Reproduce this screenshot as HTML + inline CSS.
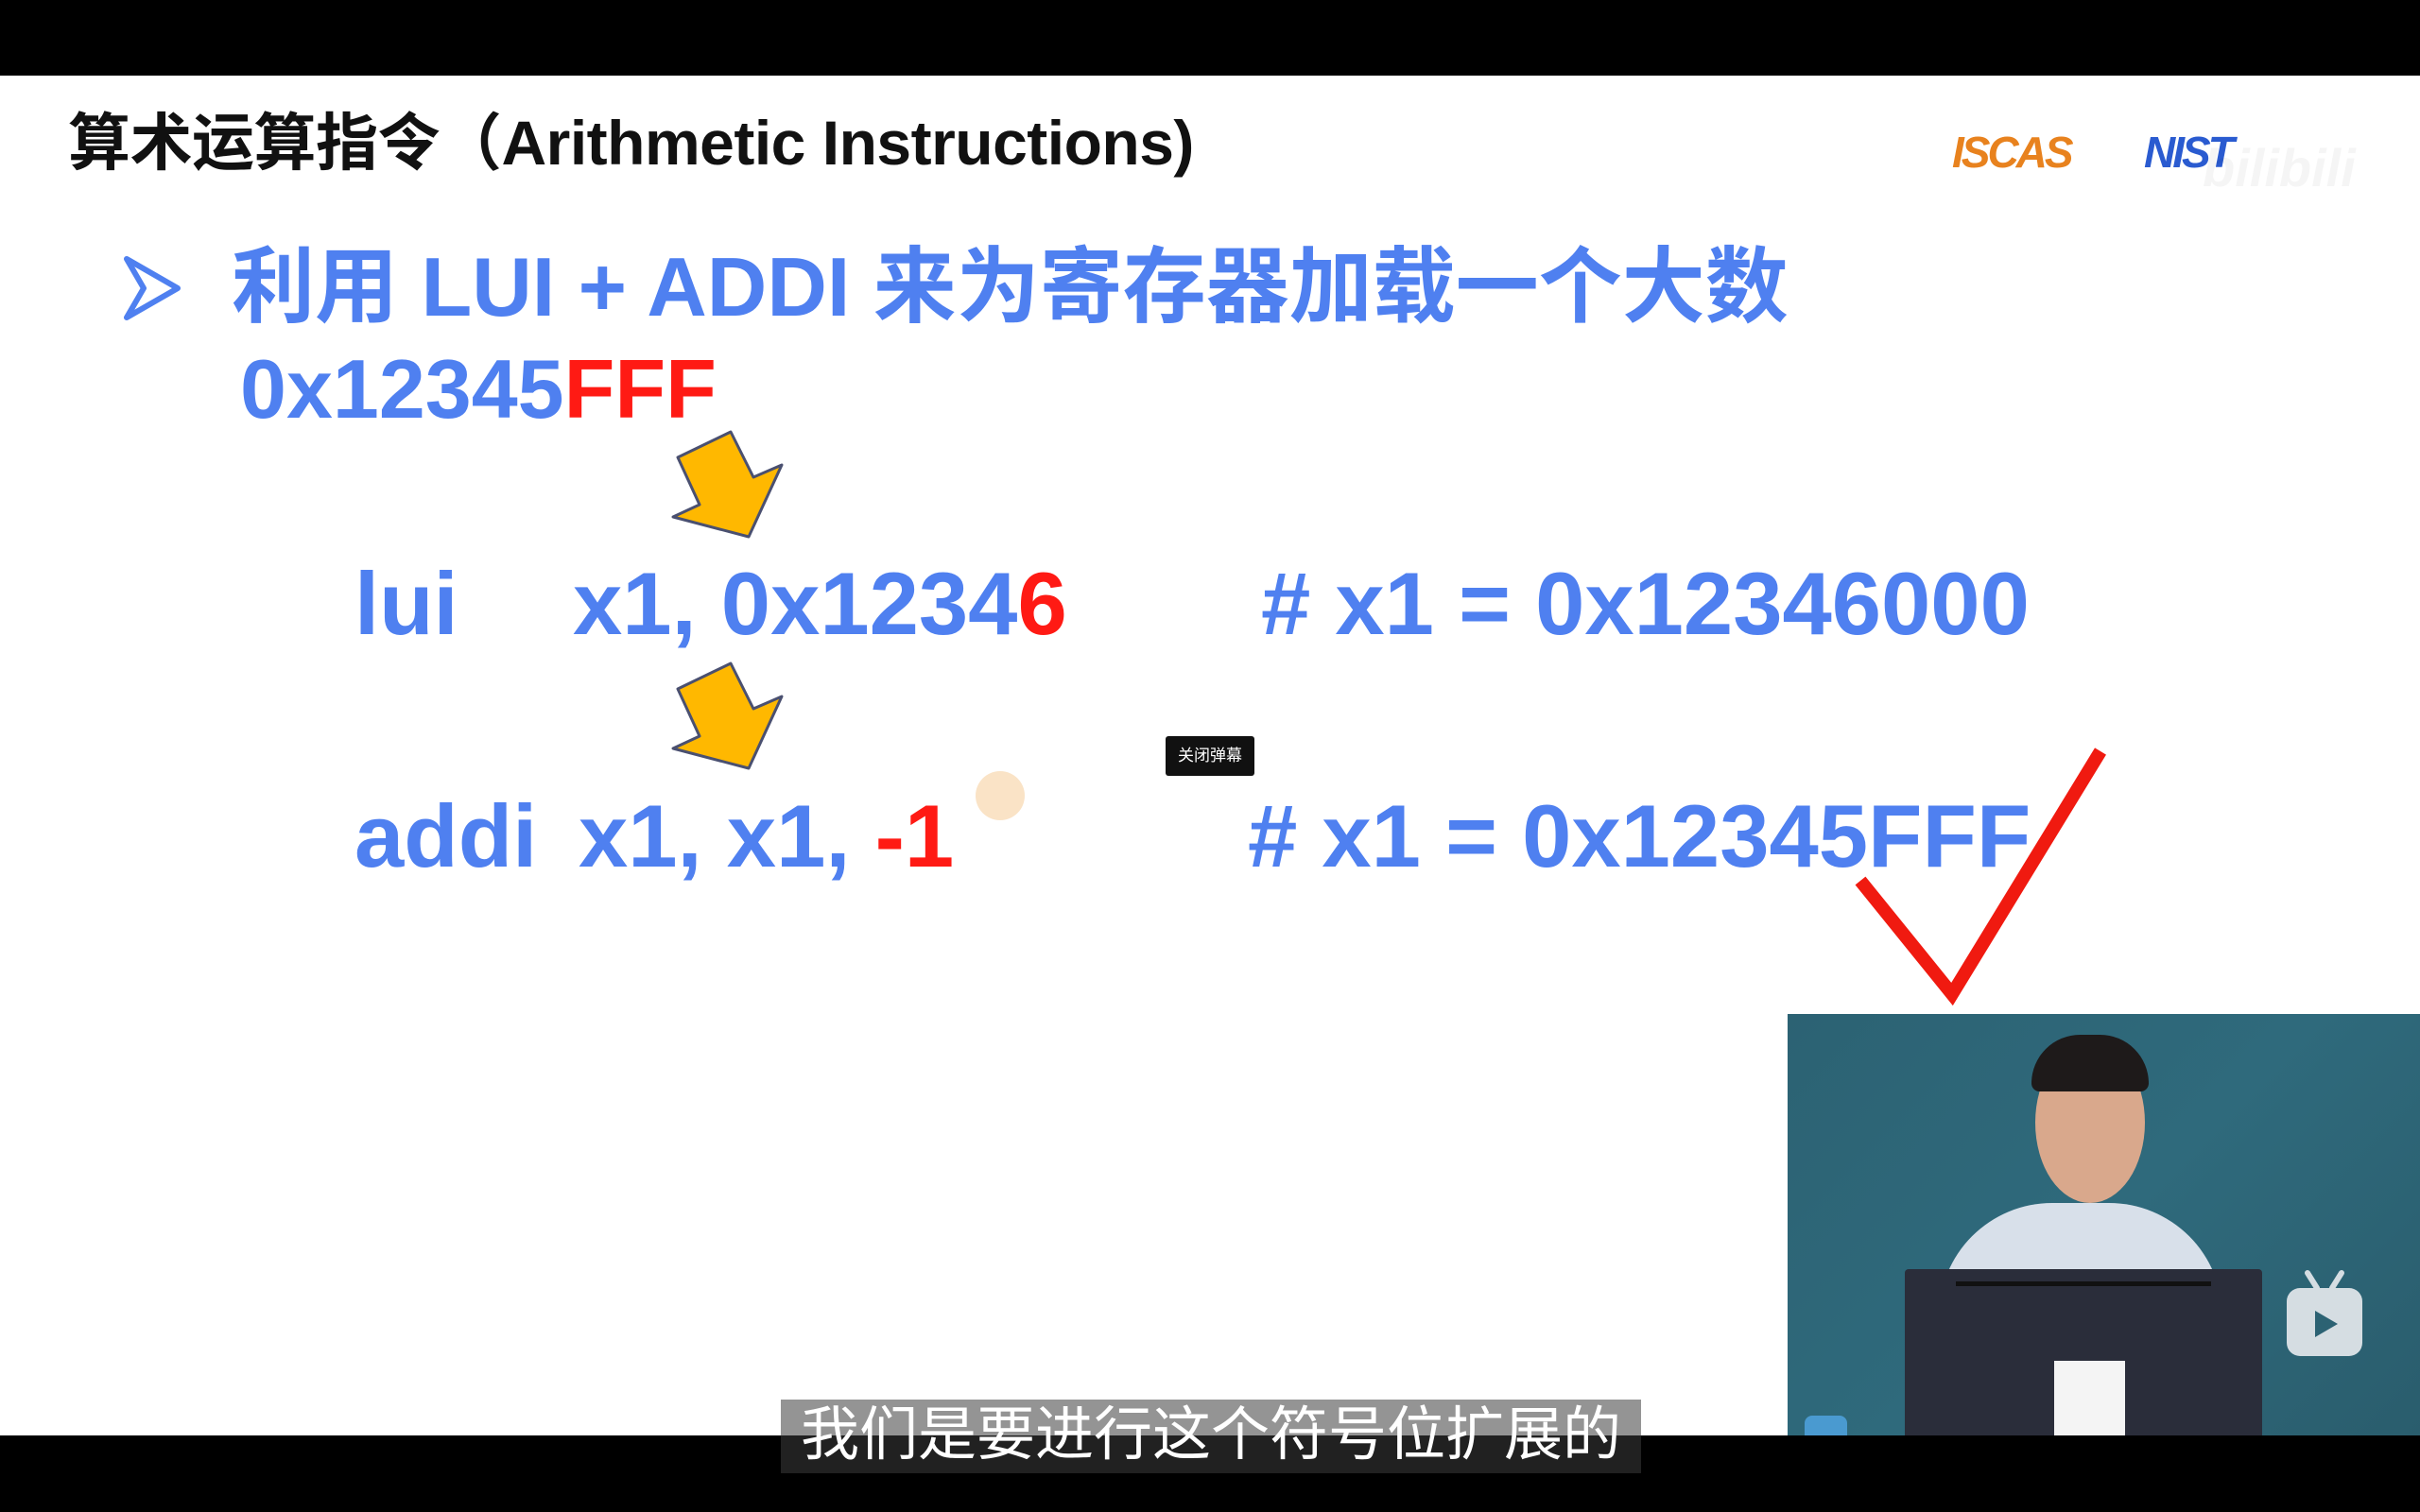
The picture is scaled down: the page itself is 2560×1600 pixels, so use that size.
<!DOCTYPE html>
<html><head><meta charset="utf-8"><style>
html,body{margin:0;padding:0}
body{width:2560px;height:1600px;position:relative;background:#fff;overflow:hidden;font-family:"Liberation Sans","Noto Sans CJK SC",sans-serif;font-weight:bold}
.a{position:absolute;white-space:nowrap;line-height:1}
.b{color:#4f80f0}.r{color:#ff1a14}
</style></head><body>
<div style="position:absolute;left:0;top:0;width:2560px;height:80px;background:#000"></div>
<div class="a" style="left:72px;top:118px;font-size:66px;color:#111;letter-spacing:-0.5px">算术运算指令（Arithmetic Instructions)</div>
<div class="a" style="left:2065px;top:138px;font-size:46px;font-style:italic;color:#e8821e;letter-spacing:-3px">ISCAS</div>
<div class="a" style="left:2268px;top:138px;font-size:46px;font-style:italic;color:#2a5bd0;letter-spacing:-3px">NIST</div>
<div class="a" style="left:2330px;top:150px;font-size:56px;color:rgba(0,0,0,0.04);font-style:italic">bilibili</div>
<svg class="a" style="left:130px;top:270px" width="62" height="70"><path d="M4 4 L58 35 L4 66 L22 35 Z" fill="#fff" stroke="#4f80f0" stroke-width="6" stroke-linejoin="round"/></svg>
<div class="a b" style="left:245px;top:260px;font-size:88px">利用 LUI + ADDI 来为寄存器加载一个大数</div>
<div class="a b" style="left:254px;top:368px;font-size:88px">0x12345<span class="r">FFF</span></div>
<svg class="a" style="left:705px;top:452px" width="130" height="122"><path d="M12 32 L68 5 L92 53 L122 40 L87 116 L7 95 L35 82 Z" fill="#ffb800" stroke="#4a5070" stroke-width="3" stroke-linejoin="round"/></svg>
<svg class="a" style="left:705px;top:697px" width="130" height="122"><path d="M12 32 L68 5 L92 53 L122 40 L87 116 L7 95 L35 82 Z" fill="#ffb800" stroke="#4a5070" stroke-width="3" stroke-linejoin="round"/></svg>
<div class="a b" style="left:375px;top:592px;font-size:94px">lui</div>
<div class="a b" style="left:606px;top:592px;font-size:94px">x1, 0x1234<span class="r">6</span></div>
<div class="a b" style="left:1334px;top:592px;font-size:94px"># x1 = 0x12346000</div>
<div class="a b" style="left:375px;top:838px;font-size:94px">addi</div>
<div class="a b" style="left:612px;top:838px;font-size:94px">x1, x1, <span class="r">-1</span></div>
<div class="a b" style="left:1320px;top:838px;font-size:94px"># x1 = 0x12345FFF</div>
<div style="position:absolute;left:1032px;top:816px;width:52px;height:52px;border-radius:50%;background:#fae3c6"></div>
<div class="a" style="left:1233px;top:779px;width:94px;height:42px;background:#111;color:#fff;font-size:17px;font-weight:normal;text-align:center;line-height:42px;border-radius:3px">关闭弹幕</div>
<svg class="a" style="left:1950px;top:780px" width="290" height="290"><path d="M18 152 L115 272 L272 15" fill="none" stroke="#f01a10" stroke-width="14"/></svg>
<div style="position:absolute;left:1891px;top:1073px;width:669px;height:446px;background:linear-gradient(135deg,#2c6273,#2f6a7c 50%,#2a5d6d);overflow:hidden">
  <div style="position:absolute;left:160px;top:200px;width:300px;height:200px;border-radius:120px 120px 0 0;background:#d8e0ea"></div>
  <div style="position:absolute;left:262px;top:30px;width:116px;height:170px;border-radius:50%;background:#d9a88c"></div>
  <div style="position:absolute;left:258px;top:22px;width:124px;height:60px;border-radius:60px 60px 10px 10px;background:#1e1a1a"></div>
  <div style="position:absolute;left:124px;top:270px;width:378px;height:180px;background:#2a2d3a;border-radius:4px"></div>
  <div style="position:absolute;left:178px;top:283px;width:270px;height:5px;background:#111"></div>
  <div style="position:absolute;left:282px;top:367px;width:75px;height:90px;background:#f4f4f4"></div>
  <div style="position:absolute;left:528px;top:290px;width:80px;height:72px;border-radius:14px;background:#d5dde2"></div>
  <svg style="position:absolute;left:528px;top:270px" width="80" height="100"><path d="M22 4 L32 20 M58 4 L48 20" stroke="#d5dde2" stroke-width="6" stroke-linecap="round"/><path d="M30 44 L54 58 L30 72 Z" fill="#2c6273"/></svg>
  <div style="position:absolute;left:18px;top:425px;width:45px;height:30px;background:#4a9ad0;border-radius:8px 8px 0 0"></div>
</div>
<div style="position:absolute;left:0;top:1519px;width:2560px;height:81px;background:#000"></div>
<div style="position:absolute;left:826px;top:1481px;width:910px;height:78px;background:rgba(60,60,60,0.55)"></div>
<div class="a" style="left:826px;top:1488px;width:910px;text-align:center;font-size:62px;font-weight:normal;color:#fff">我们是要进行这个符号位扩展的</div>
</body></html>
